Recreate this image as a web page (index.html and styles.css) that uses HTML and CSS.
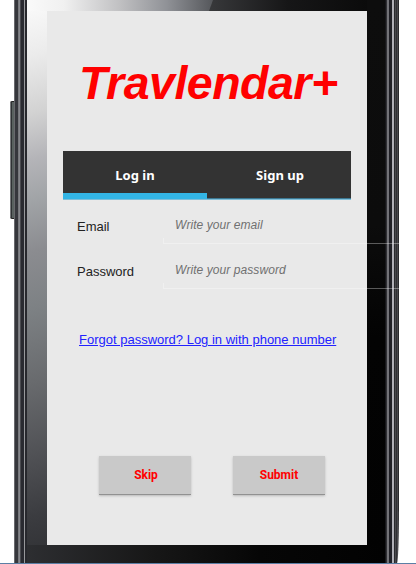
FILE: index.html
```
<!DOCTYPE html>
<html lang="en">
<head>
<meta charset="utf-8">
<title>Travlendar+</title>
<link rel="stylesheet" href="styles.css">
</head>
<body>
<div class="stage">
  <div class="phone">
    <div class="rail rail-left"></div>
    <div class="face">
      <svg class="glare" width="358" height="563" viewBox="0 0 358 563" aria-hidden="true">
        <defs>
          <linearGradient id="top" x1="0" y1="0" x2="1" y2="0">
            <stop offset="0" stop-color="#fafafa"/><stop offset=".2" stop-color="#f0f0f0"/>
            <stop offset=".5" stop-color="#c0c0c2"/><stop offset=".75" stop-color="#909297"/><stop offset="1" stop-color="#55575b"/>
          </linearGradient>
          <linearGradient id="side" gradientUnits="userSpaceOnUse" x1="0" y1="11" x2="150" y2="545">
            <stop offset="0" stop-color="#f8f8f8"/><stop offset=".08" stop-color="#ebebeb"/>
            <stop offset=".18" stop-color="#d2d2d2"/><stop offset=".26" stop-color="#b4b4b8"/><stop offset=".33" stop-color="#a1a4a7"/>
            <stop offset=".42" stop-color="#8b8c90"/><stop offset=".52" stop-color="#7d8184"/><stop offset=".65" stop-color="#686a6d"/><stop offset=".78" stop-color="#4f5054"/>
            <stop offset=".88" stop-color="#3b3c40"/><stop offset="1" stop-color="#2b2c2f"/>
          </linearGradient>
          <linearGradient id="base" x1="0" y1="0" x2="1" y2="0">
            <stop offset="0" stop-color="#2d2e31"/><stop offset=".35" stop-color="#171717"/><stop offset=".65" stop-color="#060606"/><stop offset="1" stop-color="#020202"/>
          </linearGradient>
          <linearGradient id="dark" x1="0" y1="0" x2="1" y2="0">
            <stop offset="0" stop-color="#38393b"/><stop offset=".5" stop-color="#161617"/><stop offset="1" stop-color="#0b0b0b"/>
          </linearGradient>
          <linearGradient id="right" x1="0" y1="0" x2="0" y2="1">
            <stop offset="0" stop-color="#0d0d0d"/><stop offset=".4" stop-color="#0c0c0c"/><stop offset=".6" stop-color="#030303"/><stop offset="1" stop-color="#020202"/>
          </linearGradient>
        </defs>
        <path d="M340 0H358V563H340Z" fill="url(#right)"/>
        <path d="M182 0H340V11H182Z" fill="url(#dark)"/>
        <path d="M0 0H186L182 11H0Z" fill="url(#top)"/>
        <path d="M0 11H20V545H0Z" fill="url(#side)"/>
        <path d="M0 545H358V563H0Z" fill="url(#base)"/>
      </svg>
      <main class="screen">
        <h1 class="title">Travlendar+</h1>
        <nav class="tabs"><a class="tab active">Log in</a><a class="tab signup">Sign up</a></nav>
        <form class="fields">
          <label class="row"><span class="label">Email</span><span class="input">Write your email</span></label>
          <label class="row"><span class="label">Password</span><span class="input">Write your password</span></label>
        </form>
        <a class="forgot">Forgot password? Log in with phone number</a>
        <div class="actions"><button class="btn">Skip</button><button class="btn submit">Submit</button></div>
      </main>
    </div>
    <div class="rail rail-right"></div>
    <div class="volume"></div>
  </div>
  <div class="edge"></div>
</div>
</body>
</html>
```
FILE: styles.css
```
* { box-sizing: border-box; }
body { margin: 0; background: #fff; font-family: "Liberation Sans", Arial, sans-serif; overflow: hidden; }
.stage { width: 416px; height: 564px; display: flex; flex-direction: column; }
.phone { position: relative; display: flex; height: 563px; margin-left: 14px; width: 385px; }
.rail-left { width: 13px; background: linear-gradient(90deg, #68696d 0 1px, #36373c 1px 4px, #77787c 4px 5px, #85868b 5px 6px, #4a4b50 6px 7px, #292a30 7px 10px, #98999c 10px 11px, #27282d 11px 13px); }
.rail-right { width: 14px; background: linear-gradient(90deg, #17171a 0 1px, #303034 1px 2px, #737378 2px 4px, #202026 4px 7px, #b0b0b7 7px 9px, #29292d 9px 10px, #47474b 10px 11px, #303034 11px 12px, #49494d 12px 13px, #29292d 13px 14px); border-radius: 0 0 2px 0 / 0 0 60px 0; }
.volume { position: absolute; left: -4px; top: 101px; width: 4px; height: 118px; background: linear-gradient(90deg, #77797b 0 1px, #303335 1px 2px, #59615f 2px 4px); border-top: 1px solid #222; border-bottom: 1px solid #222; border-radius: 2px 0 0 2px; }
.face { position: relative; z-index: 1; width: 358px; padding: 11px 18px 18px 20px; }
.glare { position: absolute; inset: 0; }
.screen { position: relative; width: 320px; height: 534px; padding: 44px 16px 0; background: #e9e9e9; }
.title { margin: 0; height: 96px; padding-left: 16px; line-height: 57px; font-size: 46.5px; letter-spacing: -0.5px; font-style: italic; font-weight: bold; color: #f00; white-space: nowrap; }
.tabs { display: flex; height: 48px; background: #333; border-bottom: 1px solid #3c7893; box-shadow: 0 1px #80bfd9; }
.tab { flex: none; width: 50%; height: 48px; padding-top: 1px; text-align: center; color: #fff; font: bold 13px/47px "Noto Sans", sans-serif; }
.signup { padding-left: 2px; }
.active { border-bottom: 6px solid #33b5e5; }
.fields { margin: 0; padding-top: 4px; }
.row { display: flex; height: 45px; }
.label { flex: none; width: 100px; padding: 14px 0 0 14px; font-size: 13px; line-height: 20px; color: #222; }
.input { position: relative; flex: none; width: 236px; height: 41px; padding: 12px 0 0 12px; font-size: 12px; letter-spacing: 0.07px; font-style: italic; line-height: 20px; color: #707070; }
.input::after { content: ""; position: absolute; left: 0; bottom: 0; width: 100%; height: 5px; border-left: 1px solid #fff5; border-bottom: 1px solid #fff5; }
.forgot { display: block; margin: 37px 0 0 16px; font-size: 13px; line-height: 20px; color: #22f; text-decoration: underline; white-space: nowrap; }
.actions { display: flex; gap: 42px; margin: 106px 0 0 36px; }
.btn { width: 92px; height: 39px; padding: 0 0 0 2px; border: 0; border-bottom: 1px solid #919191; background: #c9c9c9; box-shadow: 0 1px 2px #9999; color: #f00; font: bold 12px/36px Roboto, sans-serif; }
.submit { padding-left: 0; }
.edge { height: 1px; background: #5b7fa5; }
```
